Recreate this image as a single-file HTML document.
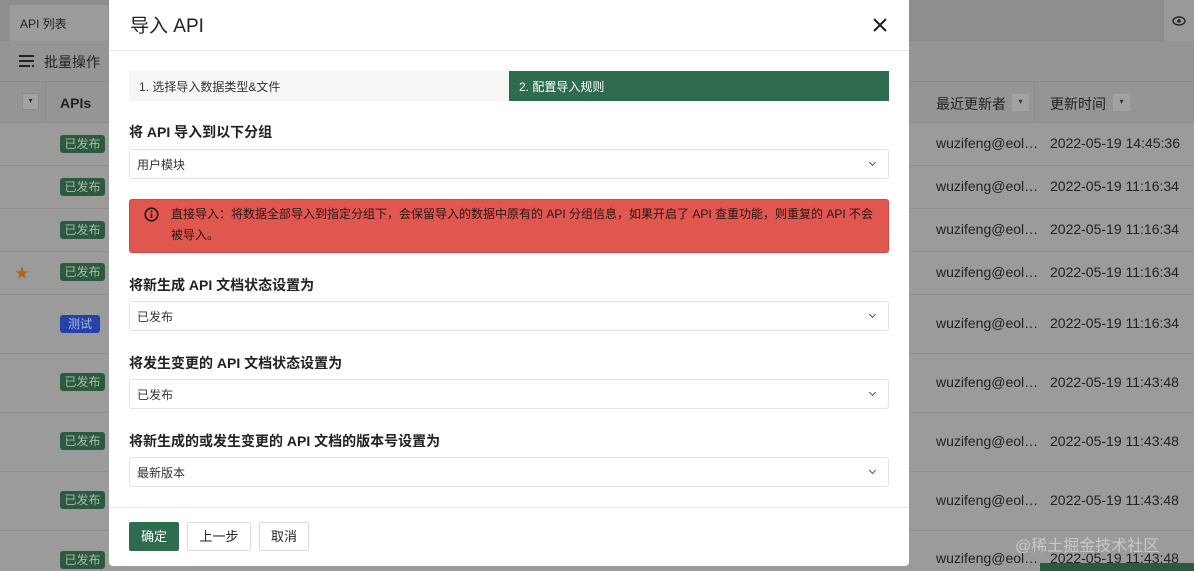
<!DOCTYPE html>
<html><head><meta charset="utf-8"><style>
*{box-sizing:border-box;margin:0;padding:0}
body{width:1194px;height:571px;overflow:hidden;position:relative;background:#9b9b9b;font-family:"Liberation Sans","Noto Sans CJK SC",sans-serif;color:#333}
.abs{position:absolute}
.tabbar{left:0;top:0;width:1194px;height:41px;background:#8e8e8e;border-bottom:1px solid #888}
.tab{left:10px;top:5px;width:98px;height:36px;background:#9c9c9c;font-size:12px;color:#222;padding:10px 0 0 10px}
.eye{left:1164px;top:0;width:30px;height:41px;background:#999}
.tool{left:0;top:41px;width:1194px;height:41px;background:#959595;border-bottom:1px solid #8c8c8c}
.thead{left:0;top:82px;width:1194px;height:40px;background:#959595}
.row{left:0;width:1194px;border-top:1px solid #8f8f8f}
.badge{position:absolute;left:60px;width:45px;height:18px;border-radius:3px;background:#2b5a3e;color:#aab8ae;font-size:12px;text-align:center;line-height:18px}
.cell{position:absolute;font-size:14px;color:#222}
.modal{left:109px;top:0;width:800px;height:566px;background:#fff;border-radius:0 0 4px 4px}
.lbl{position:absolute;left:20px;font-size:14px;font-weight:bold;color:#222}
.sel{position:absolute;left:20px;width:760px;height:30px;border:1px solid #e3e3e3;border-radius:3px;font-size:12px;color:#333;padding:6px 0 0 7px}
.sel:after{content:"";position:absolute;right:13px;top:10px;width:4px;height:4px;border-right:1.3px solid #555;border-bottom:1.3px solid #555;transform:rotate(45deg)}
.btn{position:absolute;top:522px;height:29px;border:1px solid #ddd;border-radius:2px;font-size:13px;text-align:center;line-height:27px;color:#222;background:#fff}
</style></head><body>
<div class="abs tabbar"></div>
<div class="abs tab">API 列表</div>
<div class="abs eye"><svg width="30" height="41"><ellipse cx="15" cy="21" rx="6" ry="4" fill="none" stroke="#222" stroke-width="1.4"/><circle cx="15" cy="21" r="1.8" fill="#222"/></svg></div>
<div class="abs tool"></div>
<svg class="abs" style="left:18px;top:54px" width="18" height="14"><path d="M1 2h15M1 7h15M1 12h11" stroke="#222" stroke-width="2"/><circle cx="15" cy="12" r="1.2" fill="#222"/></svg>
<div class="abs" style="left:44px;top:52px;font-size:14px;color:#222">批量操作</div>
<div class="abs thead"></div>
<div class="abs" style="left:22px;top:93px;width:17px;height:17px;background:#a2a2a2;border:1px solid #8b8b8b;font-size:8px;text-align:center;line-height:14px">▾</div>
<div class="abs" style="left:45px;top:82px;width:1px;height:40px;background:#8d8d8d"></div>
<div class="abs" style="left:60px;top:95px;font-size:14px;font-weight:bold;color:#222">APIs</div>
<div class="abs" style="left:936px;top:94px;font-size:14px;color:#222">最近更新者</div>
<div class="abs" style="left:1012px;top:94px;width:17px;height:17px;background:#a2a2a2;font-size:8px;text-align:center;line-height:16px">▾</div>
<div class="abs" style="left:1034px;top:82px;width:1px;height:40px;background:#8d8d8d"></div>
<div class="abs" style="left:1050px;top:94px;font-size:14px;color:#222">更新时间</div>
<div class="abs" style="left:1113px;top:94px;width:17px;height:17px;background:#a2a2a2;font-size:8px;text-align:center;line-height:16px">▾</div>

<div class="abs row" style="top:122px;height:43px"><div class="badge" style="top:12px">已发布</div><div class="cell" style="left:936px;top:12px">wuzifeng@eol…</div><div class="cell" style="left:1050px;top:12px">2022-05-19 14:45:36</div></div>
<div class="abs row" style="top:165px;height:43px"><div class="badge" style="top:12px">已发布</div><div class="cell" style="left:936px;top:12px">wuzifeng@eol…</div><div class="cell" style="left:1050px;top:12px">2022-05-19 11:16:34</div></div>
<div class="abs row" style="top:208px;height:43px"><div class="badge" style="top:12px">已发布</div><div class="cell" style="left:936px;top:12px">wuzifeng@eol…</div><div class="cell" style="left:1050px;top:12px">2022-05-19 11:16:34</div></div>
<div class="abs row" style="top:251px;height:43px"><div style="position:absolute;left:15px;top:11px;color:#b0631f;font-size:14px">★</div><div class="badge" style="top:11px">已发布</div><div class="cell" style="left:936px;top:12px">wuzifeng@eol…</div><div class="cell" style="left:1050px;top:12px">2022-05-19 11:16:34</div></div>
<div class="abs row" style="top:294px;height:59px"><div class="badge" style="top:20px;background:#2443a8;color:#b0b8d8;width:40px">测试</div><div class="cell" style="left:936px;top:20px">wuzifeng@eol…</div><div class="cell" style="left:1050px;top:20px">2022-05-19 11:16:34</div></div>
<div class="abs row" style="top:353px;height:59px"><div class="badge" style="top:19px">已发布</div><div class="cell" style="left:936px;top:20px">wuzifeng@eol…</div><div class="cell" style="left:1050px;top:20px">2022-05-19 11:43:48</div></div>
<div class="abs row" style="top:412px;height:59px"><div class="badge" style="top:19px">已发布</div><div class="cell" style="left:936px;top:20px">wuzifeng@eol…</div><div class="cell" style="left:1050px;top:20px">2022-05-19 11:43:48</div></div>
<div class="abs row" style="top:471px;height:59px"><div class="badge" style="top:19px">已发布</div><div class="cell" style="left:936px;top:20px">wuzifeng@eol…</div><div class="cell" style="left:1050px;top:20px">2022-05-19 11:43:48</div></div>
<div class="abs row" style="top:530px;height:41px"><div class="badge" style="top:20px">已发布</div><div class="cell" style="left:936px;top:19px">wuzifeng@eol…</div><div class="cell" style="left:1050px;top:19px">2022-05-19 11:43:48</div></div>
<div class="abs" style="left:1015px;top:532px;font-size:16px;color:#c8c8c8">@稀土掘金技术社区</div>
<div class="abs" style="left:1040px;top:563px;width:154px;height:8px;background:#2b5a3e"></div>

<div class="abs modal">
 <div style="position:absolute;left:21px;top:11px;font-size:19px;color:#222">导入 API</div>
 <svg style="position:absolute;left:764px;top:18px" width="14" height="14"><path d="M1 1L13 13M13 1L1 13" stroke="#222" stroke-width="2"/></svg>
 <div style="position:absolute;left:0;top:50px;width:800px;height:1px;background:#e8e8e8"></div>
 <div style="position:absolute;left:20px;top:71px;width:380px;height:30px;background:#f6f6f6;font-size:12px;color:#333;padding:7px 0 0 10px">1. 选择导入数据类型&amp;文件</div>
 <div style="position:absolute;left:400px;top:71px;width:380px;height:30px;background:#2f6b4f;font-size:12px;color:#fff;padding:7px 0 0 10px">2. 配置导入规则</div>
 <div class="lbl" style="top:122px">将 API 导入到以下分组</div>
 <div class="sel" style="top:149px">用户模块</div>
 <div style="position:absolute;left:20px;top:199px;width:760px;height:54px;background:#e0574f;border:1px solid #c84a43;border-radius:3px;font-size:12px;color:#2a1514;line-height:21px;padding:4px 10px 0 41px">直接导入：将数据全部导入到指定分组下，会保留导入的数据中原有的 API 分组信息，如果开启了 API 查重功能，则重复的 API 不会被导入。
  <svg style="position:absolute;left:14px;top:7px" width="15" height="15"><circle cx="7.5" cy="7.5" r="6.3" fill="none" stroke="#2a1514" stroke-width="1.6"/><circle cx="7.5" cy="4.3" r="1" fill="#2a1514"/><path d="M7.5 6.5v4.5" stroke="#2a1514" stroke-width="1.6"/></svg></div>
 <div class="lbl" style="top:275px">将新生成 API 文档状态设置为</div>
 <div class="sel" style="top:301px">已发布</div>
 <div class="lbl" style="top:353px">将发生变更的 API 文档状态设置为</div>
 <div class="sel" style="top:379px">已发布</div>
 <div class="lbl" style="top:431px">将新生成的或发生变更的 API 文档的版本号设置为</div>
 <div class="sel" style="top:457px">最新版本</div>
 <div style="position:absolute;left:0;top:507px;width:800px;height:1px;background:#e8e8e8"></div>
 <div class="btn" style="left:20px;width:50px;background:#2f6b4f;border-color:#2f6b4f;color:#fff">确定</div>
 <div class="btn" style="left:78px;width:64px">上一步</div>
 <div class="btn" style="left:150px;width:50px">取消</div>
</div>
</body></html>
